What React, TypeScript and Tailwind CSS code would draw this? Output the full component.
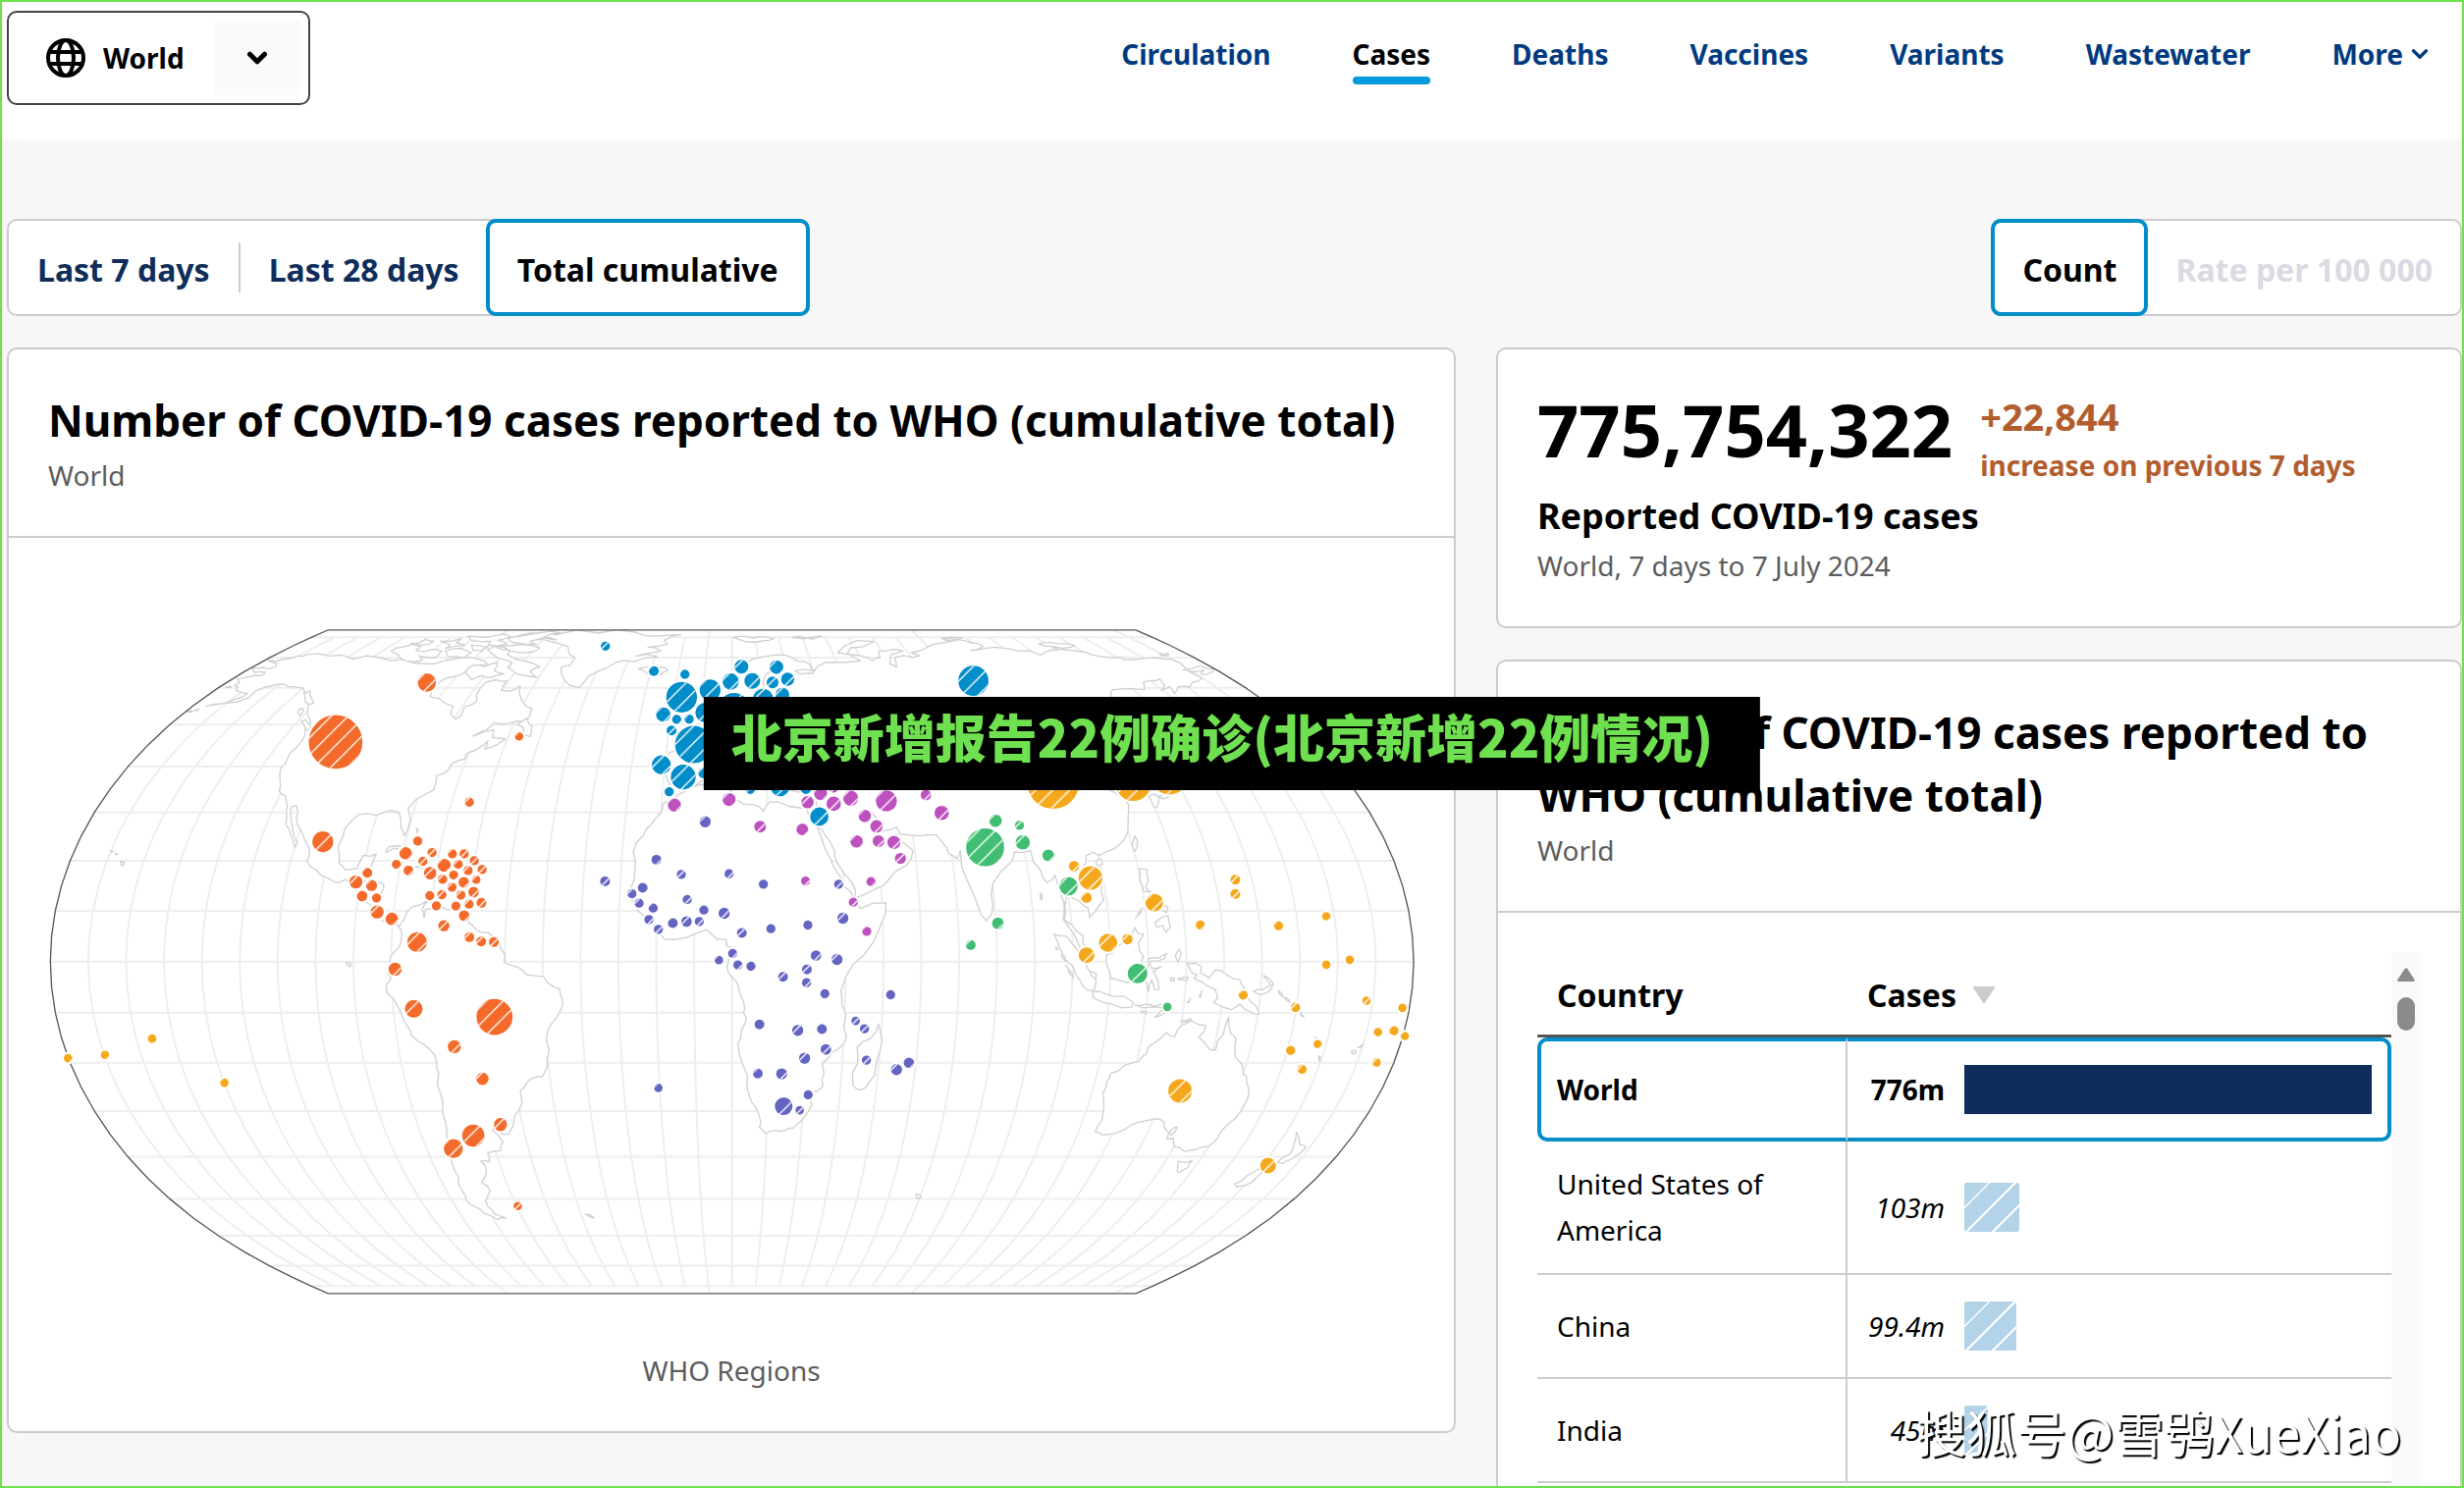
import { useState } from 'react';
import { ChevronDown } from 'lucide-react';

type Point = [number, number];
type Part = [number, number, string];

const CENTER: Point = [2117, 1080];
const SCALE = 770;

// Equal Earth projection, longitudes are relative to the central meridian
const project = (lon: number, lat: number): Point => {
  const m = Math.sqrt(3) / 2;
  const l = Math.asin(m * Math.sin((lat * Math.PI) / 180));
  const l2 = l * l;
  const l6 = l2 * l2 * l2;
  const x =
    (((lon * Math.PI) / 180) * Math.cos(l)) /
    (m * (1.340264 + 3 * -0.081106 * l2 + l6 * (7 * 0.000893 + 9 * 0.003796 * l2)));
  const y = l * (1.340264 - 0.081106 * l2 + l6 * (0.000893 + 0.003796 * l2));
  return [CENTER[0] + x * SCALE, CENTER[1] - y * SCALE];
};

const toPath = (points: Point[], close = false) =>
  'M' + points.map(([x, y]) => `${x.toFixed(1)},${y.toFixed(1)}`).join('L') + (close ? 'Z' : '');

const range = (from: number, to: number, step: number) => {
  const out: number[] = [];
  for (let v = from; v <= to; v += step) out.push(v);
  return out;
};

const graticule = [
  ...range(-170, 170, 10).map(lon => {
    const top = (lon + 10) % 90 === 0 ? 90 : 80;
    return toPath(range(-top, top, 5).map(lat => project(lon, lat)));
  }),
  ...range(-80, 80, 10).map(lat => toPath([project(-180, lat), project(180, lat)])),
].join('');

const sphere = toPath(
  [
    ...range(-90, 90, 5).map(lat => project(-180, lat)),
    ...range(-90, 90, 5).map(lat => project(180, -lat)),
  ],
  true
);

// Splits every edge once and nudges the middle, so that coasts are not ruler-straight
const roughen = (points: Point[]) =>
  points.flatMap(([x, y], i): Point[] => {
    const [nx, ny] = points[(i + 1) % points.length];
    const k = (((i * 37 + Math.round(x) * 13) % 17) / 17 - 0.5) * 0.24;
    return [
      [x, y],
      [(x + nx) / 2 - (ny - y) * k, (y + ny) / 2 + (nx - x) * k],
    ];
  });

const ring = (...parts: Part[]) =>
  toPath(
    roughen(
      parts.flatMap(([dx, dy, text]) =>
        text.split(' ').map((pair): Point => {
          const [x, y] = pair.split(',').map(Number);
          return [x + dx, y + dy];
        })
      )
    ),
    true
  );

const land = [
  // Americas
  ring(
    [0, 0, '820,140 790,145 745,155 700,158 725,168 722,178 680,180 650,180 655,195 690,195 680,205 640,208 605,215 612,225 595,235 607,240 600,250 635,260 620,270 510,298 560,290 640,272 690,240 735,230 760,238 805,243 810,262 822,290 818,320 830,350 812,372 808,395 785,425 755,465 740,485 735,520 733,560 752,572 757,600 755,640 752,660 768,690 782,730 788,715 775,680 768,640 770,605 785,602 790,620 785,640 800,680 820,725 825,745 818,770 830,790 860,815 905,838 935,828 955,855 975,865 990,890 1010,905 1020,925 1040,950 1060,962 1070,950 1090,965 1100,975 1107,1000 1105,1020'],
    [840, 1020, '250,25 232,48 230,75 224,98 235,107 220,130 225,158 240,170 265,215 290,265 297,285 320,305 350,325 368,345 375,370 380,400 388,470 392,520 405,570 406,605 410,650 420,670 430,700 442,720 440,740 455,765 465,790 490,808 520,830 560,848 585,843 550,830 530,808 523,792 538,760 530,745 512,735 525,710 525,690 508,670 535,672 530,645 570,638 577,610 560,590 545,575 548,555 570,585 595,587 607,565 610,545 625,515 635,490 630,455 650,430 668,415 697,412 712,380 718,330 715,265 725,250 755,205 758,175 750,143 735,138 700,105 650,100 640,90 605,72 580,62 583,45 570,20 568,0'],
    [0, 0, '1385,1000 1370,990 1345,988 1325,970 1310,955 1298,925 1280,915 1255,922 1235,915 1200,918 1180,920 1175,945 1170,920 1190,892 1165,905 1135,915 1115,950 1098,975 1085,960 1075,940 1045,940 1038,920 1035,890 1052,855 1050,840 1010,830 985,830 1005,800 1015,785 1030,750 990,755 970,795 935,800 915,780 912,730 935,670 975,630 1030,632 1070,618 1100,625 1105,670 1115,695 1125,680 1127,610 1150,585 1205,555 1215,510 1235,505 1260,475 1300,460 1310,440 1345,425 1370,405 1360,430 1400,415 1425,400 1385,395 1390,370 1355,375 1325,390 1390,350 1440,350 1480,345 1500,325 1505,305 1490,300 1470,270 1470,235 1440,252 1412,250 1430,220 1395,218 1365,225 1335,265 1335,285 1300,300 1290,325 1272,338 1258,325 1265,300 1240,290 1220,275 1195,270 1200,245 1220,228 1260,210 1310,190 1370,170 1360,160 1290,150 1245,158 1165,168 1115,155 1040,150 960,155 885,145']
  ),
  // Eurasia
  ring(
    [1380, 0, '745,225 775,175 800,155 870,142 920,150 935,160 975,170 985,190 930,190 950,200 985,198 1000,175 1020,165 1080,165 1130,160 1060,135 1080,115 1160,100 1170,102 1100,120 1090,140 1150,150 1165,160 1190,150 1185,130 1230,125 1260,130 1225,140 1220,170 1240,180 1235,150 1290,150 1310,145 1285,135 1350,110 1440,90'],
    [2760, 0, '0,90 50,95 90,105 125,115 85,128 130,122 190,122 230,130 300,142 320,130 410,130 460,142 550,150 555,156 620,152 650,150 700,155 750,190 795,213 765,225 755,240 720,240 710,260 695,238 670,250 680,235 665,215 650,220 615,225 618,248 520,248 515,270 540,330 600,400 560,470 500,500 510,555 545,575 570,600 568,660 560,700 525,735 480,755 460,745 440,755 435,785 470,800 490,830 493,890 450,945 445,915 430,905 400,885 385,870 375,910 373,950 395,965 430,1000 437,1040 420,1035 400,990 370,950 372,900 360,860 345,815 320,838 300,800 270,740 220,745 210,775 155,840 155,910 135,955 120,940 80,840 55,740 45,765 20,750 0,715'],
    [1380, 0, '1360,692 1310,695 1250,690 1240,670 1200,680 1165,625 1150,640 1175,690 1200,712 1240,690 1245,705 1290,740 1270,785 1215,830 1180,855 1115,885 1105,840 1060,780 1050,740 1020,690 998,668 1000,560 870,530 700,500 640,530 600,550 560,555 540,525 537,500 545,440 600,430 590,400 640,350 700,300 740,260']
  ),
  // Africa
  ring(
    [1380, 0, '640,538 590,560 560,580 525,600 520,625 490,660 465,695 435,745 440,800 425,860 430,890 480,950 530,1012 600,1005 660,982 690,1010 720,1012 720,1030'],
    [1980, 1020, '133,15 125,45 122,75 135,105 158,140 165,165 175,195 172,215 180,240 165,270 155,310 160,345 185,410 190,470 210,505 225,550 220,565 238,585 270,575 295,577 325,568 350,545 380,500 378,485 385,460 415,440 418,400 413,370 440,340 480,310 487,290 485,225 473,190 470,150 485,105 540,40'],
    [1380, 0, '1170,1020 1195,960 1208,900 1130,918 1112,888 1080,850 1065,815 1040,770 1010,700 995,665 960,605 950,610 875,590 855,590 835,620 805,600 745,582 735,560 720,548']
  ),
  ring([1980, 1020, '585,250 595,300 580,360 545,445 525,453 508,440 505,400 522,370 520,320 560,295']),
  // Greenland, Iceland, Svalbard, Newfoundland
  ring([1380, 0, '60,92 120,95 200,105 235,115 240,140 258,150 240,175 215,180 222,215 240,235 270,242 300,205 330,190 380,165 440,162 510,148 445,145 520,130 480,118 540,110 530,98 580,80 510,84 440,72 330,75 200,80 120,75']),
  ring([1380, 0, '450,185 475,178 490,180 530,180 540,190 520,202 480,200 470,192']),
  ring([1380, 0, '740,88 800,90 850,88 865,92 840,98 780,102 760,95']),
  ring([1380, 0, '920,88 990,86 1010,84 960,90']),
  ring([1380, 0, '80,355 110,335 115,350 125,360 120,392 95,385 100,365']),
  // Arctic archipelago
  ring([0, 0, '1390,115 1440,125 1430,140 1480,160 1530,178 1500,190 1520,210 1460,200 1430,180 1445,165 1400,150 1370,125']),
  ring([0, 0, '1300,195 1330,172 1360,178 1400,165 1390,190 1420,200 1385,210 1350,205 1320,218']),
  ring([0, 0, '1075,130 1110,118 1165,115 1150,128 1200,125 1230,130 1210,150 1160,145 1170,158 1120,160 1095,140']),
  ring([0, 0, '1135,107 1180,95 1205,100 1190,110 1160,112']),
  ring([0, 0, '1225,100 1290,92 1275,105 1300,112 1240,122 1255,110']),
  ring([0, 0, '1240,130 1290,122 1320,135 1300,150 1250,148']),
  ring([0, 0, '1310,84 1420,78 1440,88 1400,98 1430,108 1370,112 1380,100 1320,98']),
  ring([0, 0, '1320,112 1370,118 1350,130 1325,128']),
  ring([0, 0, '1430,90 1530,74 1600,76 1540,88 1580,96 1500,100 1520,110 1450,104']),
  ring([0, 0, '1400,115 1470,110 1530,120 1510,132 1440,130']),
  ring([2760, 0, '295,108 350,107 405,112 395,118 340,116 355,126 310,114']),
  ring([2760, 0, '0,92 30,92 45,98 10,97']),
  ring([2760, 0, '662,138 690,137 692,142 668,143']),
  ring([2760, 0, '735,188 790,175 830,185 825,195 790,200 800,188 760,192']),
  // Aleutians and Pacific coast of Canada
  ring([0, 0, '450,316 462,312 468,315']),
  ring([0, 0, '472,311 484,307 486,311']),
  ring([0, 0, '570,240 584,237 586,242']),
  ring([0, 0, '808,258 826,252 832,275 838,290 822,292 812,285']),
  ring([0, 0, '790,315 800,305 808,308 796,328']),
  ring([0, 0, '800,345 812,340 832,372 815,370']),
  ring([0, 0, '247,772 260,776 252,787']),
  ring([0, 0, '218,740 224,742 220,746']),
  ring([0, 0, '232,748 238,750 234,753']),
  // Caribbean
  ring([0, 0, '1058,745 1070,728 1100,726 1125,740 1100,738 1085,733 1066,742']),
  ring([0, 0, '1150,790 1180,782 1210,795 1185,800']),
  ring([0, 0, '1152,670 1158,678 1154,686']),
  ring([840, 1020, '98,62 112,66 110,76 100,70']),
  // South-east Asia
  ring([3030, 930, '70,65 88,70 110,72 140,110 165,150 195,190 195,235 175,238 150,205 130,165 90,110']),
  ring([3030, 930, '190,242 215,242 250,255 285,255 315,275 310,288 250,280 190,260']),
  ring([3030, 930, '320,45 330,65 345,65 330,90 345,135 325,180 300,215 245,200 235,165 232,130 250,125 270,100 300,80']),
  ring([3030, 930, '360,140 395,138 415,125 410,140 365,148 370,170 398,165 375,180 392,235 378,235 370,205 360,240 355,190']),
  ring([3030, 930, '380,320 400,300 425,288 410,305']),
  ring([3030, 930, '320,283 345,282 380,286 415,282 400,290 340,291']),
  ring([3030, 930, '338,300 355,303 352,310 342,306']),
  ring([3030, 930, '478,155 505,155 522,165 520,185 545,200 565,175 600,190 640,205 655,235 670,270 700,310 675,305 640,280 615,297 590,290 570,280 558,275 572,260 565,235 520,210 500,200 508,190 490,180']),
  ring([3030, 930, '680,240 710,236 735,222 712,192 742,218 725,244 700,250']),
  ring([3030, 930, '445,125 455,112 460,125 450,150 445,140']),
  ring([3030, 930, '450,202 482,198 478,208 455,206']),
  ring([3030, 930, '515,255 524,238 520,258']),
  ring([3030, 930, '478,275 490,262 486,272']),
  ring([3030, 930, '428,200 440,200 438,210 428,208']),
  ring([3030, 930, '758,238 765,244 772,258 762,250']),
  ring([3030, 930, '776,258 790,266 792,274']),
  ring([3030, 930, '822,304 836,318 828,316']),
  ring([3030, 930, '76,106 84,110 80,114']),
  ring([3030, 930, '94,128 104,134 106,148 98,140']),
  ring([3030, 930, '108,160 120,178 130,200 118,186']),
  ring([3030, 930, '182,180 200,186 200,200 188,195']),
  ring([2760, 0, '603,795 625,797 630,830 622,855 640,868 615,865 603,830']),
  ring([2760, 0, '650,960 670,945 690,940 698,975 685,990 675,970 655,975']),
  ring([2760, 0, '590,948 600,932 612,915 606,930']),
  ring([2760, 0, '665,905 690,915 685,930 668,920']),
  ring([2760, 0, '588,695 597,715 590,742 580,720']),
  ring([2760, 0, '470,775 485,765 490,780 475,790']),
  ring([2760, 0, '630,575 645,568 662,578 655,608 645,605 640,590']),
  ring([2760, 0, '662,574 680,568 696,572 675,582']),
  ring([2760, 0, '300,872 304,872 304,890 301,890']),
  // Oceania
  ring([3030, 930, '605,320 612,370 628,385 625,440 647,465 650,495 660,500 668,540 655,585 625,630 585,665 545,715 515,720 490,725 470,730 440,715 437,690 415,690 430,665 448,655 430,680 410,660 408,640 385,630 325,642 290,662 220,680 198,670 218,635 222,550 232,520 245,492 290,465 330,455 355,430 360,410 390,390 415,367 440,380 460,345 490,330 535,345 530,365 515,380 550,420 565,420 590,370']),
  ring([3030, 930, '460,330 490,324 488,332 465,336']),
  ring([3030, 930, '452,760 475,764 495,758 480,780 455,795 448,792']),
  ring([3030, 930, '812,672 820,690 822,710 842,717 825,735 795,755 770,768 752,764 780,745 800,728 808,700']),
  ring([3030, 930, '705,780 720,790 690,810 660,832 628,837 625,828 650,815 680,795']),
  ring([3030, 930, '980,425 992,420 996,428 986,433']),
  ring([3030, 930, '1000,412 1018,402 1012,410']),
  ring([3030, 930, '870,380 876,386 871,388']),
  ring([3030, 930, '880,438 885,440 883,455']),
  ring([0, 0, '1668,1852 1682,1853 1696,1864 1680,1858']),
  ring([0, 0, '2680,1790 2692,1794 2696,1800 2682,1803']),
];

const baltic = 'M2215,245L2212,225L2220,200L2250,190L2262,200L2255,235M2228,195L2238,180L2228,165';

const REGIONS: { name: string; color: string; cases: number[][] }[] = [
  {
    name: 'Americas',
    color: '#f36a2a',
    cases: [
      [1184, 226, 28], [905, 408, 82], [1466, 391, 13], [866, 713, 32], [1314, 592, 14], [1156, 711, 14],
      [1119, 748, 19], [1091, 782, 14], [1128, 801, 15], [1200, 746, 14], [1172, 773, 14], [1194, 809, 19],
      [1237, 785, 20], [1262, 750, 14], [1298, 750, 14], [1329, 771, 14], [1353, 798, 14], [1280, 782, 14],
      [1310, 801, 14], [1266, 815, 14], [1232, 828, 14], [1297, 837, 16], [1335, 829, 13], [1261, 852, 14],
      [1327, 867, 16], [1193, 878, 14], [1230, 875, 14], [1288, 876, 14], [1213, 909, 14], [1273, 910, 14],
      [1313, 904, 14], [1351, 900, 15], [1298, 939, 16], [1236, 970, 17], [1314, 1005, 15], [1350, 1018, 15],
      [1389, 1020, 15], [1002, 808, 15], [967, 836, 20], [1015, 847, 17], [986, 879, 16], [1030, 885, 14],
      [1032, 928, 20], [1077, 949, 19], [1154, 1020, 30], [1087, 1103, 20], [1144, 1224, 27], [1391, 1249, 55],
      [1268, 1340, 20], [1354, 1438, 19], [1409, 1578, 20], [1326, 1612, 34], [1265, 1651, 29], [1462, 1827, 13],
    ],
  },
  {
    name: 'Europe',
    color: '#008dca',
    cases: [
      [1730, 115, 14], [1878, 191, 15], [1973, 201, 14], [1963, 271, 47], [2050, 249, 32], [2146, 178, 21],
      [2113, 223, 25], [2179, 221, 24], [2253, 179, 21], [2241, 226, 18], [2287, 216, 20], [2123, 305, 47],
      [2212, 276, 31], [2271, 263, 21], [1907, 324, 22], [1948, 339, 14], [1986, 338, 14], [2035, 318, 30],
      [1932, 373, 15], [2000, 416, 57], [1901, 478, 29], [1968, 515, 38], [2030, 503, 16], [1925, 560, 14],
      [2173, 553, 14], [2264, 546, 28], [2343, 551, 16], [2384, 636, 28], [2855, 221, 46],
    ],
  },
  {
    name: 'Eastern Mediterranean',
    color: '#bd51bf',
    cases: [
      [1941, 601, 20], [2108, 584, 20], [2203, 667, 18], [2332, 675, 18], [2348, 592, 19], [2388, 566, 20],
      [2428, 550, 13], [2428, 597, 22], [2480, 580, 23], [2589, 588, 32], [2710, 570, 16], [2758, 625, 22],
      [2523, 634, 19], [2559, 666, 19], [2498, 712, 19], [2565, 711, 18], [2612, 715, 20], [2632, 764, 17],
      [2542, 835, 14], [2342, 833, 14], [2488, 898, 14], [2529, 987, 14],
    ],
  },
  {
    name: 'Africa',
    color: '#6464c3',
    cases: [
      [2035, 652, 17], [1886, 768, 15], [1962, 813, 14], [2108, 811, 14], [2213, 843, 14], [1729, 834, 15],
      [1844, 854, 15], [1811, 872, 14], [1833, 901, 14], [1876, 916, 14], [1863, 951, 14], [1892, 981, 14],
      [1936, 962, 15], [1978, 957, 16], [2017, 957, 14], [2031, 922, 14], [1980, 890, 14], [2093, 932, 17],
      [2147, 992, 15], [2236, 979, 14], [2349, 968, 14], [2443, 843, 14], [2456, 947, 17], [2119, 1055, 14],
      [2077, 1075, 13], [2135, 1090, 14], [2175, 1094, 14], [2374, 1061, 16], [2438, 1073, 17], [2346, 1104, 15],
      [2273, 1126, 15], [2345, 1144, 14], [2401, 1178, 14], [2602, 1181, 14], [2201, 1272, 15], [2318, 1290, 17],
      [2392, 1286, 15], [2495, 1261, 13], [2522, 1285, 14], [2404, 1348, 16], [2339, 1375, 17], [2528, 1381, 14],
      [2196, 1422, 15], [2269, 1423, 17], [2620, 1410, 17], [2658, 1389, 16], [2350, 1487, 14], [2275, 1522, 27],
      [2324, 1534, 13], [1892, 1466, 13],
    ],
  },
  {
    name: 'South-East Asia',
    color: '#41be74',
    cases: [
      [2923, 649, 19], [2996, 663, 14], [2891, 730, 58], [3006, 715, 22], [3084, 755, 18], [3146, 849, 28],
      [2930, 963, 18], [2847, 1029, 15], [3357, 1116, 30], [3448, 1218, 13],
    ],
  },
  {
    name: 'Western Pacific',
    color: '#f5a81c',
    cases: [
      [344, 1315, 13], [200, 1365, 13], [87, 1375, 13], [565, 1450, 13], [3099, 533, 79], [3344, 534, 54],
      [3455, 513, 56], [3163, 788, 16], [3213, 824, 36], [3201, 884, 16], [3408, 899, 27], [3267, 1022, 28],
      [3326, 1011, 16], [3201, 1060, 24], [3656, 829, 15], [3656, 873, 15], [3549, 968, 14], [3788, 970, 14],
      [3934, 941, 13], [3934, 1089, 13], [4006, 1074, 13], [3680, 1182, 14], [4057, 1199, 13], [4167, 1221, 13],
      [3840, 1220, 14], [3825, 1351, 14], [3908, 1332, 13], [3860, 1409, 14], [4092, 1295, 13], [4141, 1291, 14],
      [4174, 1307, 13], [4088, 1388, 13], [3487, 1475, 36], [3756, 1703, 24],
    ],
  },
];

const ROWS = [
  { country: 'World', value: '776m', share: 100 },
  { country: 'United States of America', value: '103m', share: 13.4 },
  { country: 'China', value: '99.4m', share: 12.8 },
  { country: 'India', value: '45m', share: 5.8 },
];

const NAV = ['Circulation', 'Cases', 'Deaths', 'Vaccines', 'Variants', 'Wastewater'];
const PERIODS = ['Last 7 days', 'Last 28 days', 'Total cumulative'];

const GlobeIcon = () => (
  <svg viewBox="0 0 40 40" className="size-10" fill="none" stroke="#000" strokeWidth="4" aria-hidden="true">
    <circle cx="20" cy="20" r="18" />
    <ellipse cx="20" cy="20" rx="8" ry="18" />
    <path d="M3 14H37M3 26H37" />
  </svg>
);

const WorldMap = () => (
  <svg viewBox="26 60 4178 2040" className="block w-full" role="img" aria-label="World">
    <defs>
      <pattern id="hatch" width="51.75" height="51.75" patternUnits="userSpaceOnUse">
        <path d="M-10,40L40,-10M20,61.75L61.75,20" stroke="#fff" strokeWidth="4" />
      </pattern>
      <clipPath id="globe">
        <path d={sphere} />
      </clipPath>
    </defs>
    <path d={graticule} fill="none" stroke="#eee" strokeWidth="6" />
    <g fill="#fff" stroke="#d0d0d0" strokeWidth="4" strokeLinejoin="round" clipPath="url(#globe)">
      {land.map((d, i) => (
        <path key={i} d={d} />
      ))}
      <path d={baltic} fill="none" />
    </g>
    <path d={sphere} fill="none" stroke="#555" strokeWidth="4" />
    {REGIONS.map(region => (
      <g key={region.name} fill={region.color}>
        {region.cases.map(([x, y, r], i) => (
          <g key={i}>
            <circle cx={x} cy={y} r={r + 3} stroke="#fff" strokeWidth="6" />
            <circle cx={x} cy={y} r={r} fill="url(#hatch)" />
          </g>
        ))}
      </g>
    ))}
  </svg>
);

const CardHeading = ({ title }: { title: string }) => (
  <div className="border-b-2 border-[#ccc] px-10 pt-10 pb-[38px]">
    <h2 className="text-[44px] leading-16 font-bold">{title}</h2>
    <p className="text-[28px] leading-12 text-[#5c5c5c]">World</p>
  </div>
);

const App = () => {
  const [period, setPeriod] = useState('Total cumulative');
  const [unit, setUnit] = useState('Count');

  return (
    <div className="relative h-screen overflow-hidden bg-[#f7f7f7] font-['Noto_Sans',sans-serif] text-black">
      <header className="flex items-start justify-between bg-white pt-[11px] pr-8 pb-9 pl-[7px]">
        <button
          aria-haspopup="listbox"
          className="flex h-24 items-center rounded-[10px] border-2 border-[#444] bg-white pr-2 pl-[38px] text-[28px] font-bold"
        >
          <GlobeIcon />
          <span className="ml-[18px]">World</span>
          <span className="ml-[30px] flex h-19 w-[88px] items-center justify-center rounded bg-[#fafafa]">
            <ChevronDown size={30} strokeWidth={4} />
          </span>
        </button>
        <nav className="flex gap-[83px] pt-6 text-[28px] leading-10 font-bold text-[#003a80]">
          {NAV.map(item => (
            <a key={item} href={`#${item.toLowerCase()}`} className={item === 'Cases' ? 'text-black' : ''}>
              {item}
              {item === 'Cases' && <span className="mt-[3px] block h-2 rounded bg-[#009ade]" />}
            </a>
          ))}
          <button className="flex items-center gap-1 self-start">
            More
            <ChevronDown size={26} strokeWidth={3} />
          </button>
        </nav>
      </header>

      <main className="pt-20 pr-[2px] pl-[7px]">
        <div className="flex justify-between text-[32px] font-bold">
          <div className="flex h-[99px] rounded-[10px] border-2 border-[#ccc] bg-white">
            {PERIODS.map((item, i) => (
              <div key={item} className="flex">
                {i === 1 && <span className="my-[22px] w-[2px] bg-[#ccc]" />}
                <button
                  onClick={() => setPeriod(item)}
                  className={
                    item === period
                      ? '-m-[2px] rounded-[10px] border-4 border-[#008dca] bg-white px-7 pt-1'
                      : 'px-[29px] pt-1 text-[#0f2d5b]'
                  }
                >
                  {item}
                </button>
              </div>
            ))}
          </div>
          <div className="flex h-[99px] rounded-[10px] border-2 border-[#ccc] bg-white">
            <button
              onClick={() => setUnit('Count')}
              className="-my-[2px] -ml-[2px] rounded-[10px] border-4 border-[#008dca] px-7 pt-1"
              aria-pressed={unit === 'Count'}
            >
              Count
            </button>
            <button disabled className="px-7 pt-1 text-[#dadae2]">
              Rate per 100 000
            </button>
          </div>
        </div>

        <div className="mt-8 grid grid-cols-[3fr_2fr] items-start gap-[41px]">
          <section className="rounded-[10px] border-2 border-[#ccc] bg-white">
            <CardHeading title="Number of COVID-19 cases reported to WHO (cumulative total)" />
            <div className="px-10 pt-23 pb-10">
              <WorldMap />
              <p className="mt-[54px] text-center text-[28px] leading-11 text-[#5c5c5c]">WHO Regions</p>
            </div>
          </section>

          <div className="flex flex-col gap-8">
            <section className="rounded-[10px] border-2 border-[#ccc] bg-white px-10 pt-10 pb-[42px]">
              <div className="flex items-start gap-7">
                <p className="text-[74px] leading-21 font-bold">775,754,322</p>
                <div className="font-bold text-[#b25d2e]">
                  <p className="text-[38px] leading-14">+22,844</p>
                  <p className="text-[28px] leading-11">increase on previous 7 days</p>
                </div>
              </div>
              <h3 className="text-[36px] leading-15 font-bold">Reported COVID-19 cases</h3>
              <p className="text-[28px] leading-10 text-[#5c5c5c]">World, 7 days to 7 July 2024</p>
            </section>

            <section className="rounded-[10px] border-2 border-[#ccc] bg-white">
              <CardHeading title="Number of COVID-19 cases reported to WHO (cumulative total)" />
              <div className="flex px-10 pt-10">
                <table className="mb-10 w-full flex-1 table-fixed border-separate border-spacing-0">
                  <thead>
                    <tr className="h-[87px] text-left text-[32px] [&>th]:border-b-3 [&>th]:border-[#555] [&>th]:px-5 [&>th]:pt-2 [&>th]:pb-1 [&>th]:font-bold">
                      <th className="w-[316px]">Country</th>
                      <th>
                        <span className="flex items-center gap-4">
                          Cases
                          <svg viewBox="0 0 24 18" className="w-6 fill-[#ccc]" aria-hidden="true">
                            <path d="M0 0H24L12 18Z" />
                          </svg>
                        </span>
                      </th>
                    </tr>
                  </thead>
                  <tbody className="text-[28px] leading-[47px]">
                    {ROWS.map((row, i) => (
                      <tr
                        key={row.country}
                        className={
                          i === 0
                            ? 'h-[106px] font-bold [&>td]:border-y-4 [&>td]:border-[#008dca]'
                            : 'h-[106px] [&>td]:border-b-2 [&>td]:border-b-[#ccc]'
                        }
                      >
                        <td
                          className={
                            i === 0
                              ? 'rounded-l-[10px] border-l-4 border-r-2 border-r-[#ccc]! pl-4'
                              : 'border-r-2 border-r-[#ccc] py-5 pl-5'
                          }
                        >
                          {row.country}
                        </td>
                        <td className={i === 0 ? 'rounded-r-[10px] border-r-4 pr-4' : 'pr-5'}>
                          <div className="flex items-center gap-5">
                            <span className={i === 0 ? 'w-[99px] text-right' : 'w-[99px] text-right italic'}>
                              {row.value}
                            </span>
                            <div className="flex-1">
                              <div
                                className={
                                  i === 0
                                    ? 'h-[50px] bg-[#0f2d5b]'
                                    : 'h-[50px] rounded-xs bg-[#b3d3e8] bg-[repeating-linear-gradient(135deg,transparent_0_17px,#fff_17px_19px)]'
                                }
                                style={{ width: `${row.share}%` }}
                              />
                            </div>
                          </div>
                        </td>
                      </tr>
                    ))}
                  </tbody>
                </table>
                <div className="flex w-[30px] flex-col items-center bg-[#fafafa] pt-4" aria-hidden="true">
                  <svg viewBox="0 0 18 14" className="w-[18px]" fill="#8b8b8b">
                    <path d="M7.5 1.2Q9-.8 10.5 1.2L17.6 12Q18.4 14 16 14H2Q-.4 14 .4 12Z" />
                  </svg>
                  <div className="mt-4 h-[34px] w-[18px] rounded-full bg-[#8b8b8b]" />
                </div>
              </div>
            </section>
          </div>
        </div>
      </main>

      <p className="absolute right-[64px] bottom-[22px] font-['Noto_Sans_CJK_SC',sans-serif] text-[51px] leading-[72px] text-white [text-shadow:2px_2px_1px_#000]">
        搜狐号@雪鸮XueXiao
      </p>
      <p className="absolute top-[710px] left-1/2 h-[95px] -translate-x-1/2 bg-black pr-12 pl-7 font-['Noto_Sans_CJK_SC',sans-serif] text-[52px] leading-20 font-black whitespace-nowrap text-[#6fe04f]">
        北京新增报告22例确诊(北京新增22例情况)
      </p>
      <div className="pointer-events-none absolute inset-0 border-2 border-[#6fe04f]" />
    </div>
  );
};

export default App;
